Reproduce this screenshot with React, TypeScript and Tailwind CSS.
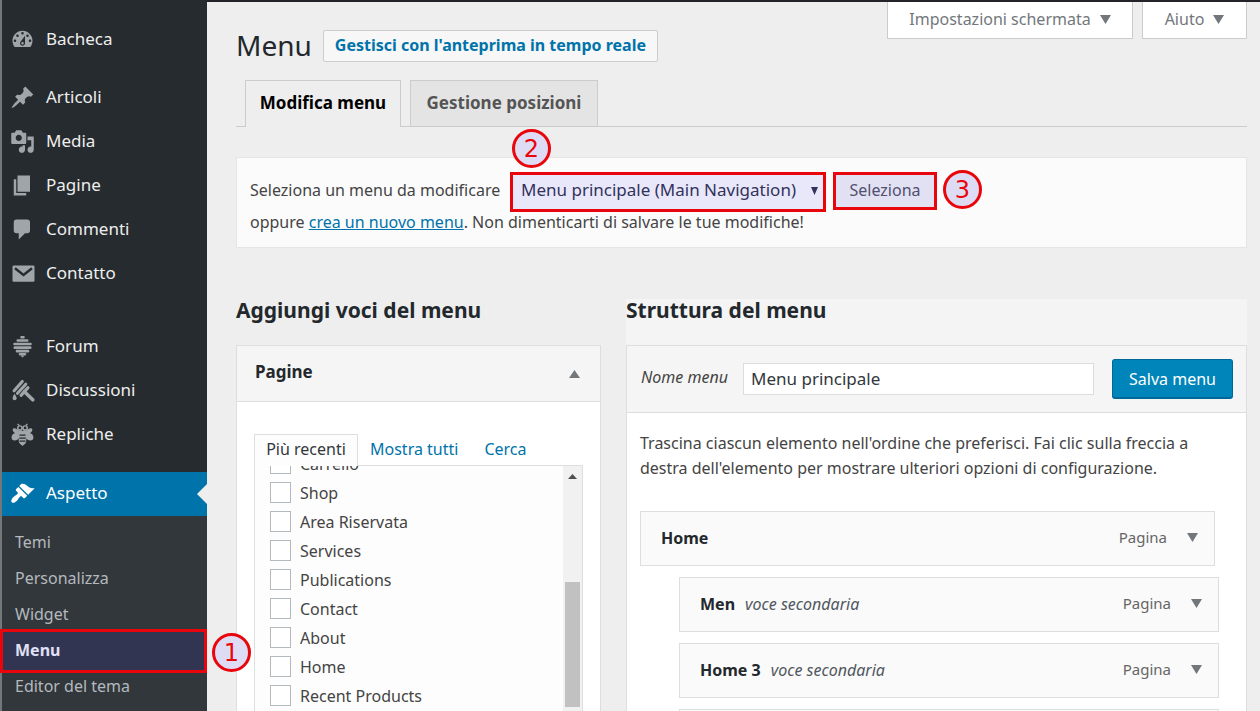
import type { ReactNode } from "react"

type NavItem = { label: string; icon: ReactNode }

const icons = {
  dashboard: (
    <path d="M3.76 16h12.48c1.1-1.37 1.76-3.11 1.76-5 0-4.42-3.58-8-8-8s-8 3.58-8 8c0 1.89.66 3.63 1.76 5zM10 4c.55 0 1 .45 1 1s-.45 1-1 1-1-.45-1-1 .45-1 1-1zM6 6c.55 0 1 .45 1 1s-.45 1-1 1-1-.45-1-1 .45-1 1-1zm8 0c.55 0 1 .45 1 1s-.45 1-1 1-1-.45-1-1 .45-1 1-1zm-5.37 5.55L12 7v6c0 1.1-.9 2-2 2s-2-.9-2-2c0-.57.24-1.08.63-1.45zM4 10c.55 0 1 .45 1 1s-.45 1-1 1-1-.45-1-1 .45-1 1-1zm12 0c.55 0 1 .45 1 1s-.45 1-1 1-1-.45-1-1 .45-1 1-1zm-5 3c0-.55-.45-1-1-1s-1 .45-1 1 .45 1 1 1 1-.45 1-1z" />
  ),
  pin: (
    <path d="M10.44 3.02l1.82-1.82 6.36 6.35-1.83 1.82c-1.05-.68-2.48-.57-3.41.36l-.75.75c-.92.93-1.04 2.35-.35 3.41l-1.83 1.82-2.41-2.41-2.8 2.79c-.42.42-3.38 2.71-3.8 2.29s1.86-3.39 2.28-3.81l2.79-2.79L4.1 9.36l1.83-1.82c1.05.69 2.48.57 3.4-.36l.75-.75c.93-.92 1.05-2.35.36-3.41z" />
  ),
  media: (
    <path d="M13 11V4c0-.55-.45-1-1-1h-1.67L9 1H5L3.67 3H2c-.55 0-1 .45-1 1v7c0 .55.45 1 1 1h10c.55 0 1-.45 1-1zM7 4.5c1.38 0 2.5 1.12 2.5 2.5S8.38 9.5 7 9.5 4.5 8.38 4.5 7 5.62 4.5 7 4.5zM14 6h5v10.5c0 1.38-1.12 2.5-2.5 2.5S14 17.88 14 16.5s1.12-2.5 2.5-2.5c.17 0 .34.02.5.05V9h-3V6zm-4 8.05V13h2v3.5c0 1.38-1.12 2.5-2.5 2.5S7 17.88 7 16.5 8.12 14 9.5 14c.17 0 .34.02.5.05z" />
  ),
  pages: <path d="M6 15V2h10v13H6zm-1 1h8v2H3V5h2v11z" />,
  comments: (
    <path d="M5 2h9c1.1 0 2 .9 2 2v7c0 1.1-.9 2-2 2h-2l-5 5v-5H5c-1.1 0-2-.9-2-2V4c0-1.1.9-2 2-2z" />
  ),
  email: (
    <>
      <rect x="2" y="3.6" width="17.6" height="13" rx="1" />
      <path d="M4 5.8l6.8 5.4 6.800-5.400" fill="none" stroke="#262b2f" strokeWidth="1.9" />
    </>
  ),
  hive: (
    <g fill="none" stroke="currentColor" strokeWidth="2.1" strokeLinecap="round">
      <path d="M9.200 2.600h1.600M6.200 5.200h7.600M3.600 8h12.800M3.800 10.900h12.400M5.600 13.700h8.800M8 16.200h4" />
      <path d="M9.800 17.800h.4" strokeWidth="1.600" />
    </g>
  ),
  dipper: (
    <g fill="none" stroke="currentColor" strokeLinecap="round">
      <path d="M3.300 10.200L9.800 2.800M6 12.200l6.600-7.200M8.800 13.900l5.600-6.200" strokeWidth="2.500" />
      <path d="M11.600 11l6.600 6.400" strokeWidth="2.900" />
      <path d="M3.600 12.600c-1.300 2-1.500 2.800-1.500 3.500a1.600 1.600 0 0 0 3.200 0c0-.7-.4-1.500-1.700-3.500z" fill="currentColor" stroke="none" />
    </g>
  ),
  bee: (
    <>
      <path d="M8.400 8.600C6.600 5.800 3.200 4 2.300 5.400 1.600 6.600 2.800 8.200 4 9 1.600 9.400.6 12.200 1.700 13.900c1.500 1.900 5.100.6 6.500-2.300zM11.600 8.600c1.800-2.800 5.200-4.600 6.100-3.200.7 1.200-.5 2.800-1.700 3.600 2.400.4 3.400 3.200 2.300 4.900-1.500 1.900-5.100.6-6.500-2.300z" />
      <path d="M7 7h6v8.600c0 1.600-2 2.600-3 3.600-1-1-3-2-3-3.600z" />
      <circle cx="7.900" cy="4.800" r="2.300" />
      <circle cx="12.100" cy="4.800" r="2.300" />
      <path d="M7.400 2.800L6 1.500M12.600 2.800L14 1.500" fill="none" stroke="currentColor" strokeWidth="1" />
      <circle cx="7.900" cy="4.700" r="1.100" fill="#262b2f" />
      <circle cx="12.100" cy="4.700" r="1.100" fill="#262b2f" />
      <path d="M7.600 10.500h4.800M7.400 12.900h5.200M7.600 15.300h4.800" fill="none" stroke="#262b2f" strokeWidth="1" />
    </>
  ),
  brush: (
    <path d="M14.48 11.06L7.41 3.99l1.5-1.5c.5-.56 2.3-.47 3.51.32 1.21.8 1.43 1.28 2.91 2.1 1.18.64 2.45 1.26 4.45.85zm-.71.71L6.7 4.7 4.93 6.47c-.39.39-.39 1.02 0 1.41l1.06 1.06c.39.39.39 1.03 0 1.42-.6.6-1.43 1.11-2.21 1.69-.35.26-.7.53-1.01.84C1.43 14.23.4 16.08 1.4 17.07c.99 1 2.84-.03 4.18-1.36.31-.31.58-.66.85-1.02.57-.78 1.08-1.61 1.69-2.21.39-.39 1.02-.39 1.41 0l1.06 1.06c.39.39 1.02.39 1.41 0z" />
  ),
}

const navGroups: NavItem[][] = [
  [{ label: "Bacheca", icon: icons.dashboard }],
  [
    { label: "Articoli", icon: icons.pin },
    { label: "Media", icon: icons.media },
    { label: "Pagine", icon: icons.pages },
    { label: "Commenti", icon: icons.comments },
    { label: "Contatto", icon: icons.email },
  ],
  [
    { label: "Forum", icon: icons.hive },
    { label: "Discussioni", icon: icons.dipper },
    { label: "Repliche", icon: icons.bee },
  ],
]

const pages = [
  "Carrello",
  "Shop",
  "Area Riservata",
  "Services",
  "Publications",
  "Contact",
  "About",
  "Home",
  "Recent Products",
]

const menuItems = [
  { title: "Home", child: false },
  { title: "Men", child: true },
  { title: "Home 3", child: true },
]

function NavIcon({ children }: { children: ReactNode }) {
  return (
    <svg viewBox="0 0 20 20" className="size-[25px] shrink-0" fill="currentColor" aria-hidden="true">
      {children}
    </svg>
  )
}

function Triangle({ up = false, className }: { up?: boolean; className: string }) {
  return (
    <svg viewBox="0 0 10 9" preserveAspectRatio="none" className={className} fill="currentColor" aria-hidden="true">
      <path d={up ? "M0 9h10L5 0z" : "M0 0h10L5 9z"} />
    </svg>
  )
}

function StepBadge({ step, className }: { step: number; className: string }) {
  return (
    <span
      className={`absolute z-10 flex size-[39px] items-center justify-center rounded-full border-3 border-[#e8060c] bg-[#dedcf5] font-['DejaVu_Sans',sans-serif] text-2xl leading-none text-[#e8060c] ${className}`}
    >
      {step}
    </span>
  )
}

function Sidebar() {
  return (
    <nav className="w-[207px] shrink-0 border-l-2 border-[#74777a] bg-[#262b2f] pt-[17px] text-[17px] text-[#eee]">
      <div className="flex flex-col gap-[14px]">
        {navGroups.map((group) => (
          <ul key={group[0].label} className="last:mt-[15px]">
            {group.map((item) => (
              <li key={item.label}>
                <a href="#" className="flex h-11 items-center gap-[11px] pl-2">
                  <span className="text-[#a0a5aa]">
                    <NavIcon>{item.icon}</NavIcon>
                  </span>
                  {item.label}
                </a>
              </li>
            ))}
          </ul>
        ))}
      </div>

      <a href="#" className="relative mt-4 flex h-11 items-center gap-[11px] bg-[#0073aa] pb-0.5 pl-2 text-white">
        <NavIcon>{icons.brush}</NavIcon>
        Aspetto
        <span className="absolute top-3 right-0 border-y-10 border-r-10 border-y-transparent border-r-[#eee]" />
      </a>
      <ul className="h-full bg-[#32373c] pt-2 text-base text-[#b4b9be]">
        {["Temi", "Personalizza", "Widget"].map((label) => (
          <li key={label}>
            <a href="#" className="flex h-9 items-center pl-[13px]">
              {label}
            </a>
          </li>
        ))}
        <li className="relative">
          <a href="#" className="flex h-9 items-center pl-[13px] font-bold text-white">
            Menu
          </a>
          <span className="absolute -top-[3px] right-0 -bottom-[5px] -left-[2px] border-3 border-[#e8060c] bg-[#3232c8]/15" />
          <StepBadge step={1} className="top-px left-[210px]" />
        </li>
        <li>
          <a href="#" className="flex h-9 items-center pl-[13px]">
            Editor del tema
          </a>
        </li>
      </ul>
    </nav>
  )
}

function PagesBox() {
  return (
    <section className="w-[365px] shrink-0">
      <h2 className="flex h-[46px] items-center pb-[22px] text-[21px] font-bold text-[#23282d]">
        Aggiungi voci del menu
      </h2>
      <div className="min-h-[400px] border border-[#dedede] bg-white">
        <h3 className="border-b border-[#dedede] bg-[#f5f5f5] text-[17px] font-bold text-[#23282d]">
          <button type="button" className="flex h-[55px] w-full items-center justify-between pr-5 pb-1 pl-[18px]">
            Pagine
            <Triangle up className="mt-1 h-2 w-[11px] text-[#72777c]" />
          </button>
        </h3>
        <div className="px-[17px] pt-8">
          <div className="flex h-[31px] items-end">
            <button
              type="button"
              className="relative z-10 -mb-px h-8 w-[104px] border border-b-0 border-[#dedede] bg-[#fdfdfd] pb-1 text-[#32373c]"
            >
              Più recenti
            </button>
            <button type="button" className="h-[31px] pb-0.5 pl-3 text-[#0073aa]">
              Mostra tutti
            </button>
            <button type="button" className="h-[31px] pb-0.5 pl-[26px] text-[#0073aa]">
              Cerca
            </button>
          </div>
          <div className="flex h-[300px] justify-between overflow-hidden border border-[#dedede] bg-[#fdfdfd]">
            <ul className="-mt-[17px] pl-[15px]">
              {pages.map((page) => (
                <li key={page}>
                  <label className="flex h-[29px] items-center gap-[9px]">
                    <input type="checkbox" className="size-[21px] appearance-none border border-[#b4b9be] bg-white" />
                    {page}
                  </label>
                </li>
              ))}
            </ul>
            <div className="flex w-[19px] flex-col items-center bg-[#f1f1f1]">
              <Triangle up className="mt-2 h-[5px] w-[9px] text-[#505050]" />
              <div className="mt-[103px] h-[125px] w-[15px] bg-[#c1c1c1]" />
            </div>
          </div>
        </div>
      </div>
    </section>
  )
}

function MenuStructure() {
  return (
    <section className="min-w-0 flex-1 bg-[#f4f4f4]">
      <h2 className="flex h-[46px] items-center pb-[22px] text-[21px] font-bold text-[#23282d]">Struttura del menu</h2>
      <form className="min-h-[400px] border border-[#dedede] bg-white" onSubmit={(e) => e.preventDefault()}>
        <div className="flex h-[67px] items-center border-b border-[#dedede] bg-[#f5f5f5] pr-[13px] pl-[14px]">
          <label htmlFor="menu-name" className="w-[102px] pb-1 italic">
            Nome menu
          </label>
          <input
            id="menu-name"
            type="text"
            defaultValue="Menu principale"
            className="mr-[18px] h-8 min-w-0 flex-1 border border-[#ddd] bg-white px-[7px] pb-0.5 text-[17px] text-[#32373c]"
          />
          <button
            type="submit"
            className="h-10 w-[121px] rounded-[3px] border border-b-2 border-[#006799] bg-[#0085ba] text-white"
          >
            Salva menu
          </button>
        </div>
        <div className="pr-[31px] pl-[13px]">
          <p className="pt-[18px] leading-[25px]">
            Trascina ciascun elemento nell'ordine che preferisci. Fai clic sulla freccia a destra dell'elemento per
            mostrare ulteriori opzioni di configurazione.
          </p>
          <ul className="flex flex-col gap-[11px] pt-[30px]">
            {menuItems.map((item) => (
              <li
                key={item.title}
                className={`flex h-[55px] items-center border border-[#dedede] bg-[#fafafa] pr-4 pb-0.5 pl-5 ${item.child ? "-mr-1 ml-[39px]" : "mr-0"}`}
              >
                <span className="font-bold text-[#23282d]">{item.title}</span>
                {item.child && <span className="ml-[10px] text-[#50575e] italic">voce secondaria</span>}
                <span className="ml-auto text-[15px] text-[#666]">Pagina</span>
                <button type="button" aria-label={`Apri ${item.title}`} className="ml-5">
                  <Triangle className="h-[9px] w-[11px] text-[#72777c]" />
                </button>
              </li>
            ))}
            <li className="-mr-1 ml-[39px] h-[55px] border border-[#dedede] bg-[#fafafa]" />
          </ul>
        </div>
      </form>
    </section>
  )
}

export default function App() {
  return (
    <div className="flex h-screen overflow-hidden bg-[#eee] font-['Noto_Sans',sans-serif] text-base text-[#444]">
      <Sidebar />
      <main className="min-w-0 flex-1 border-t-2 border-[#23232a] pr-[13px] pl-[29px]">
        <header className="flex h-[78px] items-start">
          <h1 className="pt-[21px] text-[28px] leading-[44px] text-[#23282d]">Menu</h1>
          <a
            href="#"
            className="mt-7 ml-[11px] flex h-8 items-center rounded-[2px] border border-[#ccc] bg-[#f7f7f7] px-[11px] pb-0.5 font-bold text-[#0073aa]"
          >
            Gestisci con l'anteprima in tempo reale
          </a>
          <div className="ml-auto flex gap-[9px] text-[#72777c]">
            <button
              type="button"
              className="flex h-[37px] w-[246px] items-center justify-center gap-[9px] border border-t-0 border-[#ccc] bg-white pb-0.5"
            >
              Impostazioni schermata
              <Triangle className="h-[9px] w-[11px]" />
            </button>
            <button
              type="button"
              className="flex h-[37px] w-[105px] items-center justify-center gap-[9px] border border-t-0 border-[#ccc] bg-white pb-0.5"
            >
              Aiuto
              <Triangle className="h-[9px] w-[11px]" />
            </button>
          </div>
        </header>

        <div className="flex h-[47px] gap-[9px] border-b border-[#ccc] pl-[9px] text-[17px] font-bold">
          <a
            href="#"
            className="flex h-[47px] w-[156px] items-center justify-center border border-b-0 border-[#ccc] bg-[#eee] pb-0.5 text-black"
          >
            Modifica menu
          </a>
          <a
            href="#"
            className="flex h-[46px] w-[188px] items-center justify-center border border-b-0 border-[#ccc] bg-[#e4e4e4] pb-0.5 text-[#555]"
          >
            Gestione posizioni
          </a>
        </div>

        <div className="mt-[30px] h-[91px] border border-[#e5e5e5] bg-[#fbfbfb] px-[13px] pt-[14px]">
          <div className="flex h-10 items-start">
            <label htmlFor="menu-select" className="w-[260px] shrink-0 leading-9">
              Seleziona un menu da modificare
            </label>
            <div className="relative w-[316px]">
              <select
                id="menu-select"
                className="block h-10 w-full appearance-none border-3 border-[#e8060c] bg-[#e9e8fb] pb-1 pl-2 text-[17px] text-[#32325a]"
              >
                <option>Menu principale (Main Navigation)</option>
              </select>
              <Triangle className="pointer-events-none absolute top-[15px] right-2 h-2 w-[7px] text-[#32325a]" />
              <StepBadge step={2} className="-top-[43px] left-[2px]" />
            </div>
            <div className="relative ml-[7px]">
              <button
                type="button"
                className="block h-[38px] w-[104px] border-3 border-[#e8060c] bg-[#e2e1f3] pb-0.5 text-[#50506e]"
              >
                Seleziona
              </button>
              <StepBadge step={3} className="-top-[2px] left-[110px]" />
            </div>
          </div>
          <p className="leading-5">
            oppure{" "}
            <a href="#" className="text-[#0073aa] underline">
              crea un nuovo menu
            </a>
            . Non dimenticarti di salvare le tue modifiche!
          </p>
        </div>

        <div className="mt-[51px] flex gap-[25px]">
          <PagesBox />
          <MenuStructure />
        </div>
      </main>
    </div>
  )
}
